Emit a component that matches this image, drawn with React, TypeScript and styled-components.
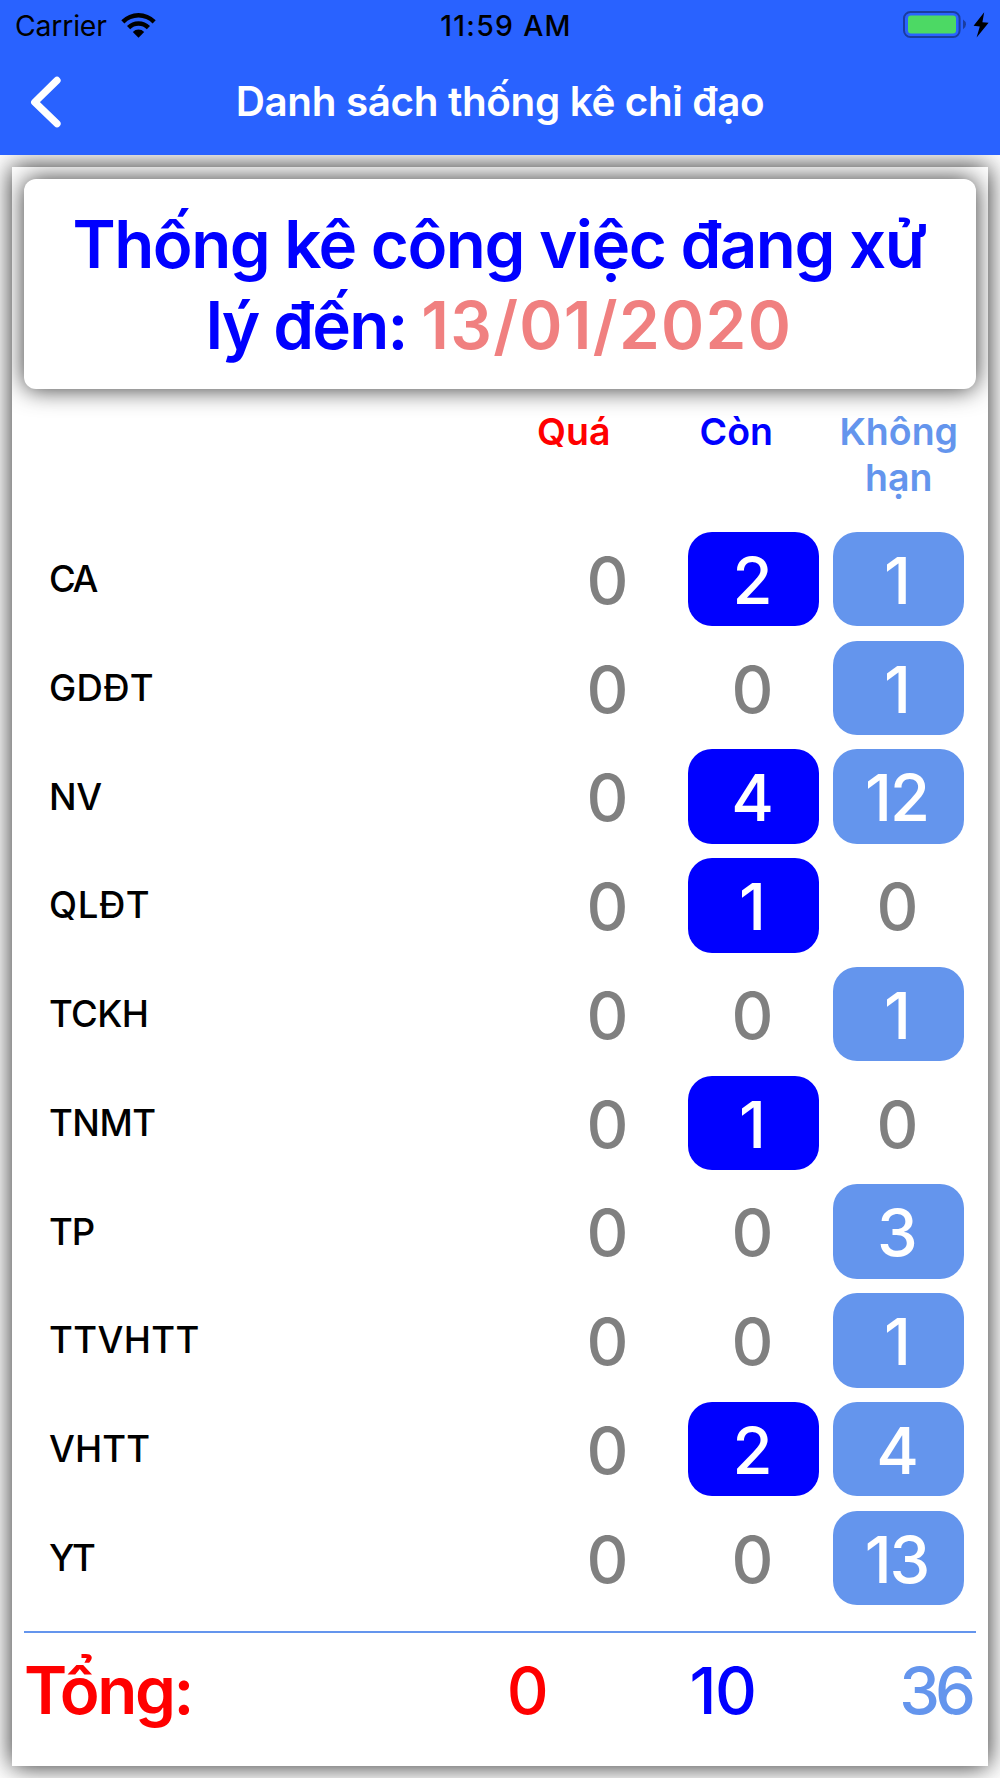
import React from "react";
import styled, { createGlobalStyle } from "styled-components";

const BLUE = "#0000ff";
const SKY = "#6495ed";
const RED = "#ff0000";

const GlobalStyle = createGlobalStyle`
  * { box-sizing: border-box; }
  body { margin: 0; background: #fff; font-family: Inter, "Noto Sans", sans-serif; }
`;

const Screen = styled.div`
  display: flex;
  flex-direction: column;
  width: 1000px;
  height: 1778px;
  overflow: hidden;
  background: #fff;
`;

const Header = styled.header`
  flex: none;
  height: 155px;
  background: #2962ff;
`;

const StatusBar = styled.div`
  display: grid;
  grid-template-columns: 1fr auto 1fr;
  align-items: center;
  height: 50px;
  padding: 0 11px 0 15px;
  font-size: 28.4px;
  color: #000;
`;

const StatusGroup = styled.div<{ $end?: boolean }>`
  display: flex;
  align-items: center;
  justify-content: ${(p) => (p.$end ? "flex-end" : "flex-start")};
  gap: ${(p) => (p.$end ? "0" : "14px")};
`;

const Carrier = styled.span`
  letter-spacing: -0.2px;
`;

const Clock = styled.span`
  padding: 0 0 0 8px;
  font-weight: 500;
  letter-spacing: 1.3px;
`;

const NavBar = styled.div`
  display: grid;
  grid-template-columns: 100px 1fr 100px;
  align-items: center;
  height: 104px;
`;

const BackButton = styled.button`
  display: flex;
  padding: 0 0 0 30px;
  border: 0;
  background: none;
`;

const NavTitle = styled.h1`
  margin: 0;
  text-align: center;
  font-size: 40.4px;
  font-weight: 600;
  letter-spacing: -0.35px;
  line-height: 50px;
  color: #fff;
  white-space: nowrap;
`;

const Body = styled.main`
  flex: 1;
  padding: 12px;
  overflow: hidden;
`;

const Panel = styled.section`
  display: flex;
  flex-direction: column;
  height: 1599px;
  padding: 12px;
  background: #fff;
  box-shadow: 0 0 24px rgba(0, 0, 0, 0.85);
  overflow: hidden;
`;

const TitleCard = styled.div`
  flex: none;
  height: 210px;
  padding: 26px 2px 0 0;
  border-radius: 12px;
  background: #fff;
  box-shadow: 0 0 24px rgba(0, 0, 0, 0.8);
  text-align: center;
  font-size: 65.5px;
  font-weight: 600;
  line-height: 80.5px;
  color: ${BLUE};
`;

const TitleLine = styled.div<{ $tracking: number }>`
  letter-spacing: ${(p) => p.$tracking}px;
  white-space: nowrap;
`;

const DateText = styled.span`
  letter-spacing: 1.3px;
  color: #f08080;
`;

const Columns = styled.div`
  display: flex;
  justify-content: flex-end;
  height: 132px;
  padding: 20px 0 0;
  margin-right: -4px;
`;

const ColumnTitle = styled.div<{ $color: string }>`
  width: 162.5px;
  padding: 0 20px;
  text-align: center;
  font-size: 37.5px;
  font-weight: 600;
  line-height: 45.8px;
  color: ${(p) => p.$color};
`;

const Rows = styled.div`
  display: flex;
  flex-direction: column;
  gap: 14.35px;
  padding: 11px 12px 0 25px;
`;

const Row = styled.div`
  display: flex;
  align-items: center;
  gap: 14px;
  height: 94.4px;
`;

const Unit = styled.div<{ $tracking: number }>`
  flex: 1;
  font-size: 36.5px;
  font-weight: 500;
  letter-spacing: ${(p) => p.$tracking}px;
  color: #000;
`;

const Count = styled.div<{ $fill?: string }>`
  display: flex;
  justify-content: center;
  width: 131px;
  height: 94.4px;
  padding: 2px 4px 0 0;
  border-radius: 24px;
  background: ${(p) => p.$fill ?? "transparent"};
  color: ${(p) => (p.$fill ? "#fff" : "#808080")};
  font-size: 65px;
  font-weight: 500;
  letter-spacing: -2px;
  line-height: 94px;
`;

const Divider = styled.hr`
  flex: none;
  width: 100%;
  height: 1.7px;
  margin: 26.2px 0 0;
  border: 0;
  background: ${SKY};
`;

const Totals = styled.div`
  display: grid;
  grid-template-columns: 400px 206px 185px 161px;
  height: 116px;
  font-size: 65px;
  font-weight: 500;
  line-height: 116px;
`;

const TotalLabel = styled.div`
  font-size: 65.5px;
  font-weight: 600;
  letter-spacing: -2.4px;
  color: ${RED};
`;

const TotalValue = styled.div<{ $color: string; $align?: string }>`
  padding-right: ${(p) => (p.$align ? 5 : 0)}px;
  text-align: ${(p) => p.$align ?? "center"};
  letter-spacing: ${(p) => (p.$align ? -5 : -1.5)}px;
  color: ${(p) => p.$color};
`;

const WifiIcon = () => (
  <svg width="35" height="25" viewBox="0 0 35 25">
    <path d="M0.3 7.2A24.3 24.3 0 0 1 34.7 7.2L31.6 10.4A19.9 19.9 0 0 0 3.4 10.4Z" />
    <path d="M6 13A16.3 16.3 0 0 1 29 13L25.8 16.2A11.8 11.8 0 0 0 9.2 16.2Z" />
    <path d="M11.8 18.9A8.1 8.1 0 0 1 23.2 18.9L17.5 24.8Z" />
  </svg>
);

const BatteryIcon = () => (
  <svg width="86" height="30" viewBox="0 0 86 30">
    <rect x="1" y="2" width="55.6" height="25" rx="6.5" fill="none" stroke="#1a3d9f" strokeWidth="2" />
    <rect x="5" y="5.4" width="48" height="18.2" rx="3" fill="#4cd964" />
    <path d="M60 9.4Q63 11.2 63 14.3T60 19.2Z" fill="#1a3d9f" />
    <path d="M81.2 2.3L70.6 15.8L76.8 16.4L73.6 27.5L85.6 12.7L79.4 12.2Z" fill="#000" />
  </svg>
);

const BackIcon = () => (
  <svg width="32" height="52" viewBox="0 0 32 52" fill="none" stroke="#fff" strokeWidth="7.2" strokeLinecap="round" strokeLinejoin="round">
    <path d="M27 4.4L4.7 26.2L27 47.7" />
  </svg>
);

const data = [
  { unit: "CA", tracking: -2.5, counts: [0, 2, 1] },
  { unit: "GDĐT", tracking: 0.3, counts: [0, 0, 1] },
  { unit: "NV", tracking: -0.3, counts: [0, 4, 12] },
  { unit: "QLĐT", tracking: 0.6, counts: [0, 1, 0] },
  { unit: "TCKH", tracking: -0.6, counts: [0, 0, 1] },
  { unit: "TNMT", tracking: -0.5, counts: [0, 1, 0] },
  { unit: "TP", tracking: -1, counts: [0, 0, 3] },
  { unit: "TTVHTT", tracking: 0.4, counts: [0, 0, 1] },
  { unit: "VHTT", tracking: 0.1, counts: [0, 2, 4] },
  { unit: "YT", tracking: -3, counts: [0, 0, 13] },
];

const fills = [RED, BLUE, SKY];

export default function App() {
  return (
    <Screen>
      <GlobalStyle />
      <Header>
        <StatusBar>
          <StatusGroup>
            <Carrier>Carrier</Carrier>
            <WifiIcon />
          </StatusGroup>
          <Clock>11:59 AM</Clock>
          <StatusGroup $end>
            <BatteryIcon />
          </StatusGroup>
        </StatusBar>
        <NavBar>
          <BackButton aria-label="Back">
            <BackIcon />
          </BackButton>
          <NavTitle>Danh sách thống kê chỉ đạo</NavTitle>
        </NavBar>
      </Header>
      <Body>
        <Panel>
          <TitleCard>
            <TitleLine $tracking={-1.5}>Thống kê công việc đang xử</TitleLine>
            <TitleLine $tracking={-1.8}>
              lý đến: <DateText>13/01/2020</DateText>
            </TitleLine>
          </TitleCard>
          <Columns>
            <ColumnTitle $color={RED}>Quá</ColumnTitle>
            <ColumnTitle $color={BLUE}>Còn</ColumnTitle>
            <ColumnTitle $color={SKY}>Không hạn</ColumnTitle>
          </Columns>
          <Rows>
            {data.map((row) => (
              <Row key={row.unit}>
                <Unit $tracking={row.tracking}>{row.unit}</Unit>
                {row.counts.map((n, i) => (
                  <Count key={i} $fill={n > 0 ? fills[i] : undefined}>
                    {n}
                  </Count>
                ))}
              </Row>
            ))}
          </Rows>
          <Divider />
          <Totals>
            <TotalLabel>Tổng:</TotalLabel>
            <TotalValue $color={RED}>0</TotalValue>
            <TotalValue $color={BLUE}>10</TotalValue>
            <TotalValue $color={SKY} $align="right">36</TotalValue>
          </Totals>
        </Panel>
      </Body>
    </Screen>
  );
}
